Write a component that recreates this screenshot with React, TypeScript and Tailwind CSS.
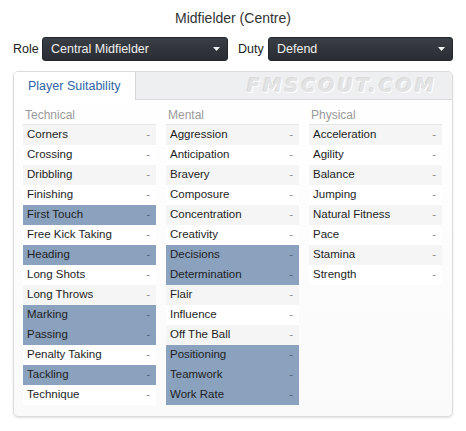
import React from 'react';

type Attr = { name: string; hi?: boolean };

const technical: Attr[] = [
  { name: 'Corners' },
  { name: 'Crossing' },
  { name: 'Dribbling' },
  { name: 'Finishing' },
  { name: 'First Touch', hi: true },
  { name: 'Free Kick Taking' },
  { name: 'Heading', hi: true },
  { name: 'Long Shots' },
  { name: 'Long Throws' },
  { name: 'Marking', hi: true },
  { name: 'Passing', hi: true },
  { name: 'Penalty Taking' },
  { name: 'Tackling', hi: true },
  { name: 'Technique' },
];

const mental: Attr[] = [
  { name: 'Aggression' },
  { name: 'Anticipation' },
  { name: 'Bravery' },
  { name: 'Composure' },
  { name: 'Concentration' },
  { name: 'Creativity' },
  { name: 'Decisions', hi: true },
  { name: 'Determination', hi: true },
  { name: 'Flair' },
  { name: 'Influence' },
  { name: 'Off The Ball' },
  { name: 'Positioning', hi: true },
  { name: 'Teamwork', hi: true },
  { name: 'Work Rate', hi: true },
];

const physical: Attr[] = [
  { name: 'Acceleration' },
  { name: 'Agility' },
  { name: 'Balance' },
  { name: 'Jumping' },
  { name: 'Natural Fitness' },
  { name: 'Pace' },
  { name: 'Stamina' },
  { name: 'Strength' },
];

const Select: React.FC<{ value: string; width: string }> = ({ value, width }) => (
  <div
    className={`${width} h-[24px] rounded-[3px] bg-gradient-to-b from-[#3a3e45] to-[#2a2d33] border border-[#24272c] flex items-center justify-between pl-[8px] pr-[7px] text-[#f0f0f0] text-[12.5px]`}
  >
    <span>{value}</span>
    <svg width="7" height="4" viewBox="0 0 7 4">
      <polygon points="0,0 7,0 3.5,4" fill="#f0f0f0" />
    </svg>
  </div>
);

const Column: React.FC<{ title: string; rows: Attr[] }> = ({ title, rows }) => (
  <div className="w-[133px]">
    <div className="h-[25px] pt-[8px] pl-[2px] text-[12px] leading-[14px] text-[#9a9a9a] border-b border-[#e6e6e6]">
      {title}
    </div>
    {rows.map((r, i) => (
      <div
        key={r.name}
        className={`h-[20px] flex items-center justify-between pl-[4px] pr-[6px] text-[11.5px] text-[#1e1e1e] ${
          r.hi ? 'bg-[#8aa2be]' : i % 2 === 0 ? 'bg-[#f5f5f5]' : 'bg-white'
        }`}
      >
        <span>{r.name}</span>
        <span className={r.hi ? 'text-[#55657a]' : 'text-[#8a8a8a]'}>-</span>
      </div>
    ))}
  </div>
);

export default function App() {
  return (
    <div
      className="w-[466px] h-[431px] bg-white text-[#333]"
      style={{ fontFamily: '"Liberation Sans", Arial, sans-serif' }}
    >
      <div className="pt-[10px] h-[37px] text-center text-[14px] leading-[16px] text-[#333]">
        Midfielder (Centre)
      </div>
      <div className="flex items-center h-[24px] pl-[13px] text-[12.5px] text-[#222]">
        <span className="w-[29px]">Role</span>
        <Select value="Central Midfielder" width="w-[186px]" />
        <span className="ml-[10px] w-[30px]">Duty</span>
        <Select value="Defend" width="w-[185px]" />
      </div>
      <div className="mt-[10px] ml-[13px] w-[440px] h-[346px] rounded-[5px] border border-[#dcdcdc] bg-gradient-to-b from-white to-[#fafafa] shadow-[0_1px_2px_rgba(0,0,0,0.12)] overflow-hidden">
        <div className="flex h-[28px] bg-[#eeeff1]">
          <div className="w-[122px] h-[28px] bg-white border-r border-[#d6d6d6] flex items-center pl-[14px] text-[12.5px] text-[#2f64a6]">
            Player Suitability
          </div>
          <div className="flex-1 border-b border-[#dcdcdc] flex items-center justify-end pr-[15px]">
            <span
              className="italic font-bold text-[19px] tracking-[3px] text-[#e3e3e3]"
              style={{ textShadow: '1px 1px 0 #ffffff, -1px -1px 0 #dadada', fontFamily: '"DejaVu Sans", sans-serif' }}
            >
              FMSCOUT.COM
            </span>
          </div>
        </div>
        <div className="flex gap-[10px] pl-[9px]">
          <Column title="Technical" rows={technical} />
          <Column title="Mental" rows={mental} />
          <Column title="Physical" rows={physical} />
        </div>
      </div>
    </div>
  );
}
